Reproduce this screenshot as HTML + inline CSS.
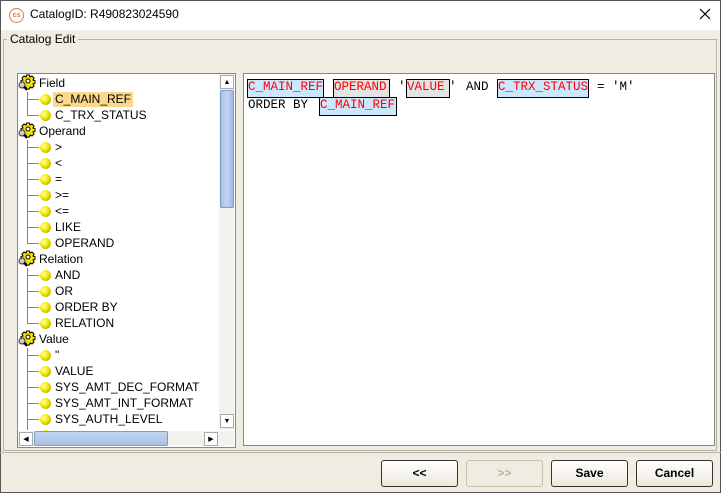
<!DOCTYPE html><html><head><style>
body{margin:0;width:721px;height:493px;position:relative;overflow:hidden;background:#fff;font-family:"Liberation Sans",sans-serif;}
.a{position:absolute}
#win{left:0;top:30px;width:719px;height:462px;background:#efede2;border-left:1px solid #555;border-right:1px solid #555;border-bottom:1px solid #555;}
.t{position:absolute;font-size:12px;color:#000;white-space:nowrap}
.b{position:absolute;width:11px;height:11px;border-radius:50%;background:radial-gradient(circle at 35% 35%,#ffffc0,#f0f000 40%,#a0a000 90%);}
.hl{position:absolute;height:1px;background:#6b86ad}
.vl{position:absolute;width:1px;background:#6b86ad}
.m{position:absolute;font-family:"Liberation Mono",monospace;font-size:12.5px;white-space:nowrap}
.box{position:absolute;height:17px;border:1px solid #000;}
.btn{position:absolute;top:460px;height:25px;width:75px;border:1px solid #333;border-radius:3px;background:linear-gradient(#fff,#ece9dc);font-size:12px;font-weight:bold;text-align:center;line-height:25px}
</style></head><body>
<div class="a" style="left:0;top:0;width:721px;height:30px;background:#fff;border-top:1px solid #555;box-sizing:border-box;border-left:1px solid #555;border-right:1px solid #555"></div>
<div class="a" style="left:9px;top:8px;width:13px;height:13px;border:1.5px solid #e87a3c;border-radius:50%;font-size:7px;color:#e87a3c;text-align:center;line-height:13px;font-weight:bold">cs</div>
<div class="t" style="left:30px;top:7px;font-size:12px">CatalogID: R490823024590</div>
<svg class="a" style="left:699px;top:8px" width="12" height="12"><path d="M1 1L11 11M11 1L1 11" stroke="#000" stroke-width="1.2"/></svg>
<div id="win" class="a"></div>
<div class="a" style="left:3px;top:39px;width:712px;height:410px;border:1px solid #b5b2a6;"></div>
<div class="a" style="left:7px;top:32px;background:#efede2;padding:0 3px;font-size:12px">Catalog Edit</div>
<div class="a" style="left:17px;top:73px;width:217px;height:373px;border:1px solid #888;background:#fff;overflow:hidden"></div>
<div id="tree">
<div class="vl" style="left:27px;top:92px;height:24px"></div>
<div class="vl" style="left:27px;top:140px;height:104px"></div>
<div class="vl" style="left:27px;top:268px;height:56px"></div>
<div class="vl" style="left:27px;top:348px;height:82px"></div>
</div>
<script>
var gear='<svg width="18" height="18" viewBox="0 0 18 18"><g transform="translate(10 7)"><path d="M-1.5-6h3l.5 2 2-1 2 2-1 2 2 .5v3l-2 .5 1 2-2 2-2-1-.5 2h-3l-.5-2-2 1-2-2 1-2-2-.5v-3l2-.5-1-2 2-2 2 1z" fill="#f3e600" stroke="#000" stroke-width="1"/><circle r="2" fill="#fff" stroke="#000"/></g><circle cx="4" cy="11" r="3" fill="#ccc" stroke="#333"/><path d="M6 13l3 3" stroke="#000" stroke-width="2"/></svg>';
var rows=[[0,'Field'],[1,'C_MAIN_REF',1],[1,'C_TRX_STATUS'],[0,'Operand'],[1,'>'],[1,'<'],[1,'='],[1,'>='],[1,'<='],[1,'LIKE'],[1,'OPERAND'],[0,'Relation'],[1,'AND'],[1,'OR'],[1,'ORDER BY'],[1,'RELATION'],[0,'Value'],[1,'"'],[1,'VALUE'],[1,'SYS_AMT_DEC_FORMAT'],[1,'SYS_AMT_INT_FORMAT'],[1,'SYS_AUTH_LEVEL']];
var h='';rows.forEach(function(r,i){var y=76+i*16;
if(r[0]==0){h+='<div class="a" style="left:18px;top:'+(y-2)+'px">'+gear+'</div><div class="t" style="left:39px;top:'+y+'px">'+r[1]+'</div>';}
else{h+='<div class="hl" style="left:27px;top:'+(y+7)+'px;width:12px"></div><div class="b" style="left:40px;top:'+(y+2)+'px"></div>'+(r[2]?'<div class="a" style="left:53px;top:'+(y)+'px;width:80px;height:15px;background:#fbd98c"></div>':'')+'<div class="t" style="left:55px;top:'+y+'px">'+r[1].replace(/</g,'&lt;').replace(/>/g,'&gt;')+'</div>';}});
document.getElementById('tree').insertAdjacentHTML('beforeend',h);
</script>
<div class="b" style="left:40px;top:430px;clip-path:inset(0 0 9px 0)"></div>
<div class="a" style="left:219px;top:74px;width:15px;height:356px;background:#f3f2ec"></div>
<div class="a" style="left:220px;top:75px;width:14px;height:14px;background:#fff;border:1px solid #aaa;box-sizing:border-box;font-size:7px;text-align:center;line-height:13px">▲</div>
<div class="a" style="left:220px;top:90px;width:14px;height:118px;background:linear-gradient(90deg,#a9c0e4,#c3d5f2,#a0b8e0);border:1px solid #7e9cc9;box-sizing:border-box;border-radius:2px"></div>
<div class="a" style="left:220px;top:414px;width:14px;height:14px;background:#fff;border:1px solid #aaa;box-sizing:border-box;font-size:7px;text-align:center;line-height:13px">▼</div>
<div class="a" style="left:18px;top:431px;width:216px;height:15px;background:#f3f2ec"></div>
<div class="a" style="left:19px;top:432px;width:14px;height:14px;background:#fff;border:1px solid #aaa;box-sizing:border-box;font-size:7px;text-align:center;line-height:13px">◀</div>
<div class="a" style="left:34px;top:431px;width:134px;height:15px;background:linear-gradient(#c3d5f2,#a9c0e4);border:1px solid #7e9cc9;box-sizing:border-box;border-radius:2px"></div>
<div class="a" style="left:204px;top:432px;width:14px;height:14px;background:#fff;border:1px solid #aaa;box-sizing:border-box;font-size:7px;text-align:center;line-height:13px">▶</div>
<div class="a" style="left:243px;top:73px;width:472px;height:373px;border:1px solid #888;box-sizing:border-box;background:#fff"></div>
<div class="box" style="left:247px;top:79px;width:75px;background:#cce6fb"></div>
<div class="box" style="left:333px;top:79px;width:55px;background:#e3e3e3"></div>
<div class="box" style="left:406px;top:79px;width:42px;background:#e3e3e3"></div>
<div class="box" style="left:497px;top:79px;width:90px;background:#cce6fb"></div>
<div class="box" style="left:319px;top:97px;width:76px;background:#cce6fb"></div>
<div class="m" style="left:248px;top:80px;color:#f00">C_MAIN_REF</div>
<div class="m" style="left:334px;top:80px;color:#f00">OPERAND</div>
<div class="m" style="left:398px;top:80px">'</div>
<div class="m" style="left:407px;top:80px;color:#f00">VALUE</div>
<div class="m" style="left:449px;top:80px">'</div>
<div class="m" style="left:466px;top:80px">AND</div>
<div class="m" style="left:498px;top:80px;color:#f00">C_TRX_STATUS</div>
<div class="m" style="left:597px;top:80px">= 'M'</div>
<div class="m" style="left:248px;top:98px">ORDER BY</div>
<div class="m" style="left:320px;top:98px;color:#f00">C_MAIN_REF</div>
<div class="a" style="left:0;top:452px;width:721px;height:1px;background:#b5b2a6"></div>
<div class="btn" style="left:381px">&lt;&lt;</div>
<div class="btn" style="left:466px;color:#b8b4a2;border-color:#c5c2b0;background:#efede2">&gt;&gt;</div>
<div class="btn" style="left:551px">Save</div>
<div class="btn" style="left:636px">Cancel</div>
</body></html>
